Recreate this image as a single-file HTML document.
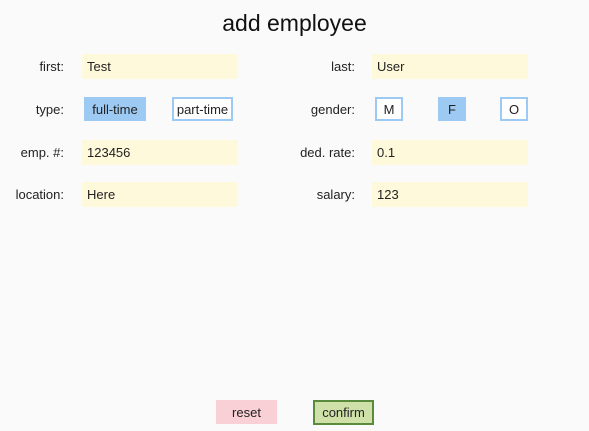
<!DOCTYPE html>
<html><head><style>
body{margin:0;width:589px;height:431px;background:#fafafa;font-family:"Liberation Sans","DejaVu Sans",sans-serif;font-size:13px;color:#222;position:relative;overflow:hidden}
.a{position:absolute;box-sizing:border-box;white-space:nowrap}
h1{position:absolute;top:10px;left:0;width:589px;text-align:center;margin:0;font-weight:normal;font-size:23px;color:#111}
.l{text-align:right;width:80px;line-height:26px}
.i{background:#fff9dc;width:156px;height:25px;line-height:26px;padding-left:5px}
.b{height:24px;line-height:23px;text-align:center;border:1px solid #9ccaf3;background:#fff}
.s{background:#9ccaf3}
</style></head><body>
<h1>add employee</h1>
<div class="a l" style="left:-16px;top:54px">first:</div>
<div class="a i" style="left:82px;top:54px">Test</div>
<div class="a l" style="left:275px;top:54px">last:</div>
<div class="a i" style="left:372px;top:54px">User</div>

<div class="a l" style="left:-16px;top:97px">type:</div>
<div class="a b s" style="left:84px;top:97px;width:62px">full-time</div>
<div class="a b" style="left:172px;top:97px;width:61px;border-width:2px;line-height:21px">part-time</div>
<div class="a l" style="left:275px;top:97px">gender:</div>
<div class="a b" style="left:375px;top:97px;width:28px;border-width:2px;line-height:21px">M</div>
<div class="a b s" style="left:438px;top:97px;width:28px">F</div>
<div class="a b" style="left:500px;top:97px;width:28px;border-width:2px;line-height:21px">O</div>

<div class="a l" style="left:-16px;top:140px">emp. #:</div>
<div class="a i" style="left:82px;top:140px">123456</div>
<div class="a l" style="left:275px;top:140px">ded. rate:</div>
<div class="a i" style="left:372px;top:140px">0.1</div>

<div class="a l" style="left:-16px;top:182px">location:</div>
<div class="a i" style="left:82px;top:182px">Here</div>
<div class="a l" style="left:275px;top:182px">salary:</div>
<div class="a i" style="left:372px;top:182px">123</div>

<div class="a" style="left:216px;top:400px;width:61px;height:24px;line-height:25px;text-align:center;background:#f8d0d6">reset</div>
<div class="a" style="left:313px;top:400px;width:61px;height:25px;line-height:22px;text-align:center;background:#cfe0a8;border:2px solid #5a8a3c">confirm</div>
</body></html>
